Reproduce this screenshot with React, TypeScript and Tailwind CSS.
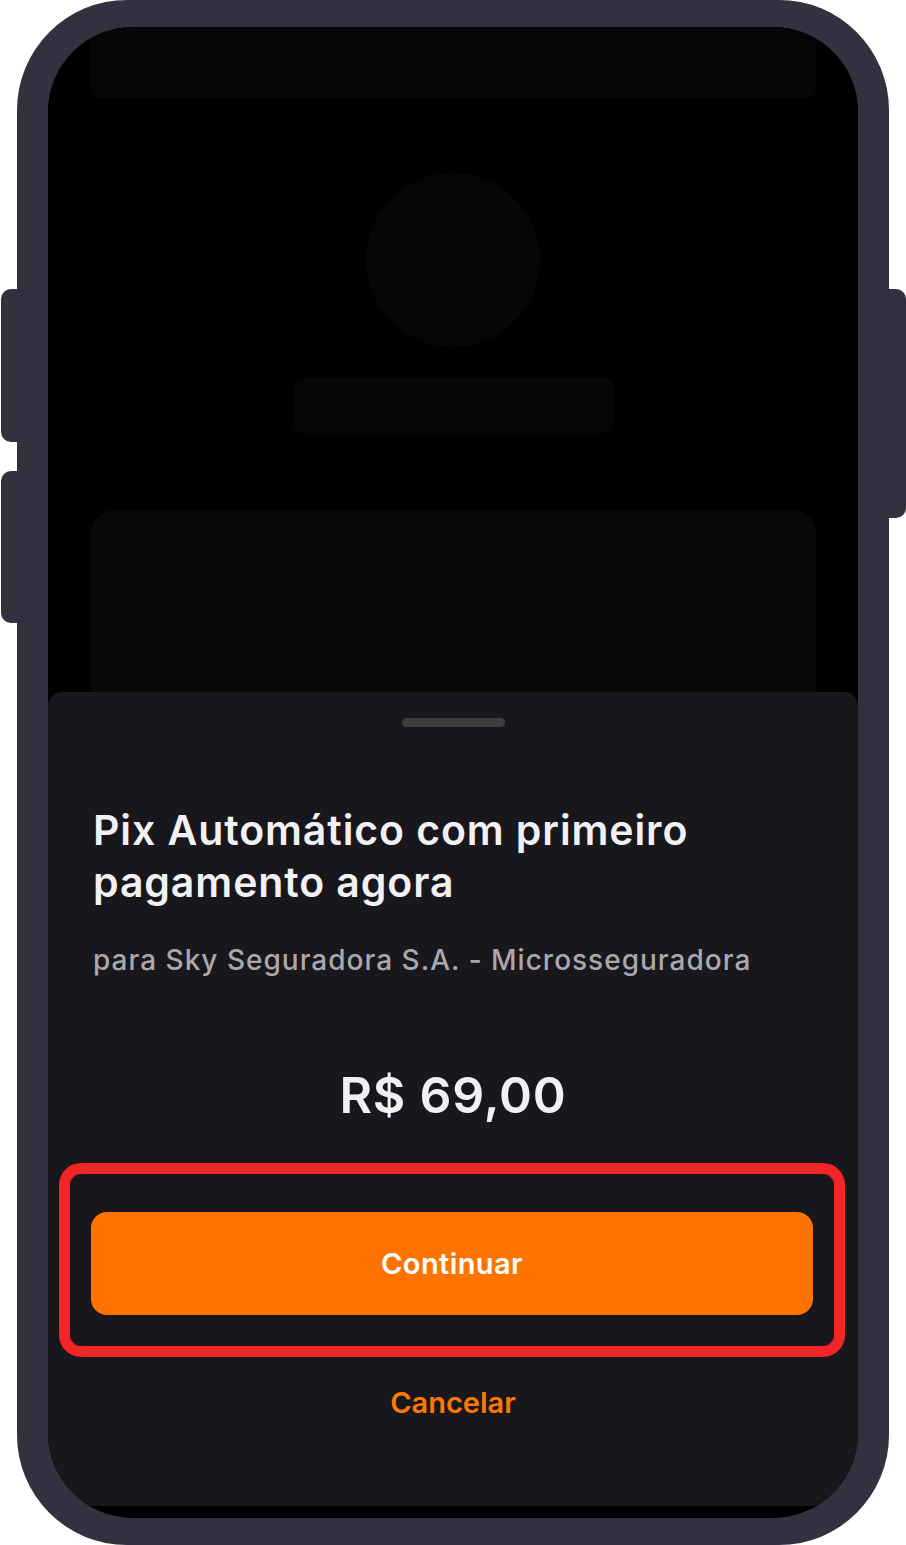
const FONT = "font-['Inter','Noto_Sans',sans-serif]";

function Placeholders() {
  return (
    <div className="flex h-[665px] flex-none flex-col items-center overflow-hidden bg-black">
      <div className="h-[71px] w-[725px] flex-none rounded-b-[10px] bg-[#060606]" />
      <div className="mt-[75px] size-[174px] flex-none rounded-full bg-[#060606]" />
      <div className="mt-[31px] h-[55px] w-[319px] flex-none rounded-[8px] bg-[#060606]" />
      <div className="mt-[77px] h-[400px] w-[725px] flex-none rounded-[24px] bg-[#080808]" />
    </div>
  );
}

function Sheet() {
  return (
    <div className={`flex h-[814px] flex-none flex-col rounded-t-[14px] bg-[#18171b] px-[45px] ${FONT}`}>
      <div className="mx-auto mt-[26px] h-[9px] w-[103px] flex-none rounded-full bg-[#3c3c3f]" />

      <h1 className="mt-[77px] whitespace-nowrap text-[41px] font-semibold leading-[52px] tracking-[0.9px] text-[#f1f1f4]">
        Pix Automático com primeiro
        <br />
        pagamento agora
      </h1>
      <p className="mt-[34px] whitespace-nowrap text-[28px] font-medium leading-[36px] tracking-[1px] text-[#a9a8ae]">
        para Sky Seguradora S.A. - Microsseguradora
      </p>

      <div className="mt-[89px] text-center text-[50px] font-semibold leading-[56px] tracking-[0.8px] text-[#f1f1f4]">R$ 69,00</div>

      {/* highlight around the main action */}
      <div className="-ml-[34px] -mr-[32px] mt-[40px] rounded-[22px] border-[11px] border-[#f22626] px-[21px] pb-[31px] pt-[38px]">
        <button className="flex h-[103px] w-full items-center justify-center rounded-[16px] bg-[#ff7300] text-[29px] font-semibold tracking-[0.4px] text-white">
          Continuar
        </button>
      </div>

      <button className="mt-[28px] text-center text-[29px] font-semibold leading-[36px] text-[#ff7800]">Cancelar</button>
    </div>
  );
}

export default function App() {
  return (
    <div className="h-[1545px] w-[906px] overflow-hidden bg-white px-[17px]">
      <div className="relative h-[1545px] w-[872px] rounded-[110px] bg-[#32313f] px-[31px] pt-[27px]">
        {/* side keys */}
        <span className="absolute -left-[16px] top-[289px] h-[153px] w-[20px] rounded-l-[10px] bg-[#32313f]" />
        <span className="absolute -left-[16px] top-[471px] h-[152px] w-[20px] rounded-l-[10px] bg-[#32313f]" />
        <span className="absolute -right-[17px] top-[289px] h-[229px] w-[20px] rounded-r-[10px] bg-[#32313f]" />

        <div className="flex h-[1491px] w-[810px] flex-col overflow-hidden rounded-[85px] bg-black">
          <Placeholders />
          <Sheet />
        </div>
      </div>
    </div>
  );
}
